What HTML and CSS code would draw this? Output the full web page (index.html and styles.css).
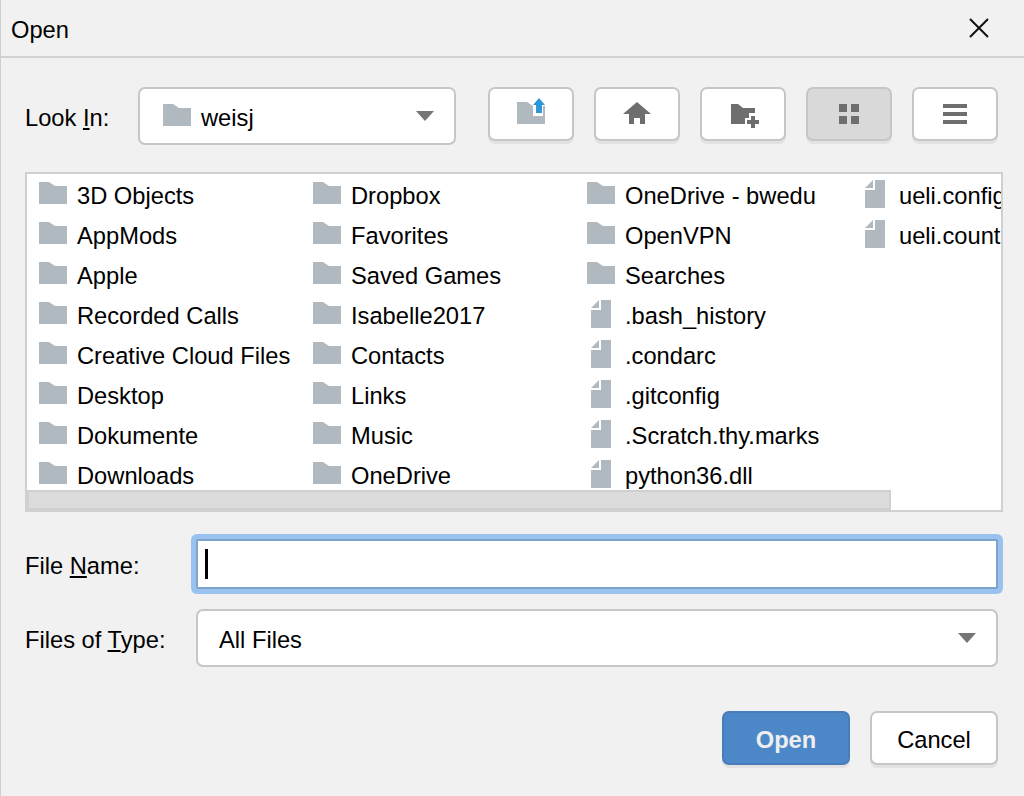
FILE: index.html
```html
<!DOCTYPE html>
<html>
<head>
  <title>Open</title>
  <link rel="stylesheet" href="styles.css">
</head>
<body>
  <svg class="defs" width="0" height="0">
    <symbol id="folder" viewBox="0 0 28 28"><path d="M0 2H10L16 6H28V24H0Z"/></symbol>
    <symbol id="file" viewBox="0 0 28 28"><path d="M14 0H24V28H4V10H14Z"/><path d="M12 0V8H4Z"/></symbol>
  </svg>

  <div class="titlebar">
    <span class="title">Open</span>
    <svg class="close" width="20" height="20" viewBox="0 0 20 20"><path d="M1 1L19 19M19 1L1 19"/></svg>
  </div>

  <div class="content">
    <div class="row top-row">
      <label class="label">Look <u>I</u>n:</label>
      <div class="combo look-in">
        <svg class="icon"><use href="#folder"/></svg>
        <span class="combo-text">weisj</span>
        <span class="arrow"></span>
      </div>
      <div class="toolbar">
        <button class="tool">
          <svg width="28" height="32" viewBox="0 0 28 32">
            <path fill="#afb9bf" d="M0 4H10L16 8V18H26V8H28V26H0Z"/>
            <path fill="#2f96d8" d="M22 0L28 7H25V15H19V7H16Z"/>
          </svg>
        </button>
        <button class="tool">
          <svg width="28" height="28" viewBox="0 0 28 28"><path fill="#6e6e6e" d="M14 2L28 14H22V24H17V18H11V24H6V14H0Z"/></svg>
        </button>
        <button class="tool">
          <svg class="new-folder" width="28" height="28" viewBox="0 0 28 28">
            <path fill="#6e6e6e" d="M0 4H7L12 8H24V13H18V18H14V24H0Z"/>
            <path fill="#6e6e6e" d="M20 16H24V20H28V24H24V28H20V24H16V20H20Z"/>
          </svg>
        </button>
        <button class="tool active">
          <span class="grid-icon"><i></i><i></i><i></i><i></i></span>
        </button>
        <button class="tool">
          <span class="lines-icon"><i></i><i></i><i></i></span>
        </button>
      </div>
    </div>

    <div class="file-list">
      <div class="files" id="files"></div>
      <div class="scrollbar"></div>
    </div>

    <div class="row name-row">
      <label class="label">File <u>N</u>ame:</label>
      <div class="name-field"><span class="caret"></span></div>
    </div>

    <div class="row type-row">
      <label class="label">Files of <u>T</u>ype:</label>
      <div class="combo type-combo">
        <span class="combo-text">All Files</span>
        <span class="arrow"></span>
      </div>
    </div>

    <div class="row actions">
      <button class="btn primary">Open</button>
      <button class="btn">Cancel</button>
    </div>
  </div>

  <script>
    const items = [
      ["folder", "3D Objects"], ["folder", "AppMods"], ["folder", "Apple"], ["folder", "Recorded Calls"],
      ["folder", "Creative Cloud Files"], ["folder", "Desktop"], ["folder", "Dokumente"], ["folder", "Downloads"],
      ["folder", "Dropbox"], ["folder", "Favorites"], ["folder", "Saved Games"], ["folder", "Isabelle2017"],
      ["folder", "Contacts"], ["folder", "Links"], ["folder", "Music"], ["folder", "OneDrive"],
      ["folder", "OneDrive - bwedu"], ["folder", "OpenVPN"], ["folder", "Searches"], ["file", ".bash_history"],
      ["file", ".condarc"], ["file", ".gitconfig"], ["file", ".Scratch.thy.marks"], ["file", "python36.dll"],
      ["file", "ueli.config.json"], ["file", "ueli.counter.json"]
    ];

    const list = document.getElementById("files");
    items.forEach(item => {
      const row = document.createElement("div");
      row.className = "file-item";
      row.innerHTML = `<svg class="icon"><use href="#${item[0]}"/></svg><span>${item[1]}</span>`;
      list.appendChild(row);
    });
  </script>
</body>
</html>
```

FILE: styles.css
```css
html, body {
  margin: 0;
  height: 796px;
  overflow: hidden;
}
body {
  font-family: "Liberation Sans", Arial, sans-serif;
  font-size: 23.7px;
  color: #000;
  background: #f1f1f1;
  border-left: 1px solid #d0d0d0;
  box-sizing: border-box;
}
.defs {
  position: absolute;
}
.titlebar {
  height: 56px;
  border-bottom: 2px solid #d2d2d2;
  display: flex;
  align-items: center;
  justify-content: space-between;
  padding: 0 35px 0 10px;
}
.title {
  padding-top: 4px;
}
.close path {
  stroke: #111;
  stroke-width: 2;
  fill: none;
}
.content {
  padding: 29px 21px 0 24px;
}
.row {
  display: flex;
  align-items: center;
  padding-right: 5px;
}
.label {
  flex: none;
  width: 171px;
  padding-top: 4px;
  box-sizing: border-box;
}
u {
  text-underline-offset: 2px;
  text-decoration-thickness: 2px;
}
.top-row .label {
  width: 113px;
}
.combo {
  height: 58px;
  box-sizing: border-box;
  background: #fff;
  border: 2px solid #c6c6c6;
  border-radius: 7px;
  display: flex;
  align-items: center;
}
.combo-text {
  padding-top: 4px;
}
.look-in {
  width: 318px;
  padding-left: 23px;
}
.look-in .combo-text {
  margin-left: 10px;
}
.type-combo {
  flex: 1;
  padding-left: 21px;
}
.arrow {
  width: 0;
  height: 0;
  border-left: 9px solid transparent;
  border-right: 9px solid transparent;
  border-top: 10px solid #757575;
  margin-left: auto;
  margin-right: 20px;
}
.icon {
  width: 28px;
  height: 28px;
  flex: none;
  fill: #afb9bf;
}
.toolbar {
  margin-left: auto;
  align-self: flex-start;
  display: flex;
  gap: 20px;
}
.tool {
  width: 86px;
  height: 54px;
  padding: 0;
  background: #fff;
  border: 2px solid #c6c6c6;
  border-radius: 7px;
  box-shadow: 0 3px 0 #e2e2e2;
  display: flex;
  align-items: center;
  justify-content: center;
}
.tool.active {
  background: #d9d9d9;
}
.new-folder {
  margin-left: 4px;
}
.grid-icon {
  display: grid;
  grid-template-columns: 8px 8px;
  gap: 4px;
}
.grid-icon i {
  height: 8px;
  background: #6e6e6e;
}
.lines-icon {
  display: flex;
  flex-direction: column;
  gap: 4px;
  width: 24px;
}
.lines-icon i {
  height: 4px;
  background: #6e6e6e;
}
.file-list {
  position: relative;
  height: 340px;
  box-sizing: border-box;
  margin-top: 27px;
  background: #fff;
  border: 2px solid #d0d0d0;
  overflow: hidden;
}
.files {
  display: grid;
  grid-auto-flow: column;
  grid-template-rows: repeat(8, 40px);
  grid-auto-columns: 274px;
  padding-left: 12px;
}
.file-item {
  display: flex;
  align-items: center;
  gap: 10px;
  white-space: nowrap;
}
.file-item span {
  margin-top: 4px;
}
.scrollbar {
  position: absolute;
  left: 0;
  bottom: 0;
  width: 864px;
  height: 20px;
  box-sizing: border-box;
  background: #dcdcdc;
  border: 2px solid #d0d0d0;
}
.name-row {
  margin-top: 27px;
}
.name-field {
  flex: 1;
  height: 50px;
  box-sizing: border-box;
  background: #fff;
  border: 2px solid #7fa3cf;
  box-shadow: 0 0 0 5px #99c2f0;
  border-radius: 2px;
  display: flex;
  align-items: center;
  padding-left: 7px;
}
.caret {
  width: 3px;
  height: 30px;
  background: #000;
}
.type-row {
  margin-top: 20px;
}
.actions {
  margin-top: 44px;
  justify-content: flex-end;
  gap: 20px;
}
.btn {
  width: 128px;
  height: 54px;
  padding: 4px 0 0;
  font-family: inherit;
  font-size: inherit;
  color: #000;
  background: #fff;
  border: 2px solid #c6c6c6;
  border-radius: 7px;
  box-shadow: 0 3px 0 #e2e2e2;
}
.btn.primary {
  color: #eee;
  font-weight: bold;
  background: #4c88c8;
  border-color: #477cb8;
}
```
